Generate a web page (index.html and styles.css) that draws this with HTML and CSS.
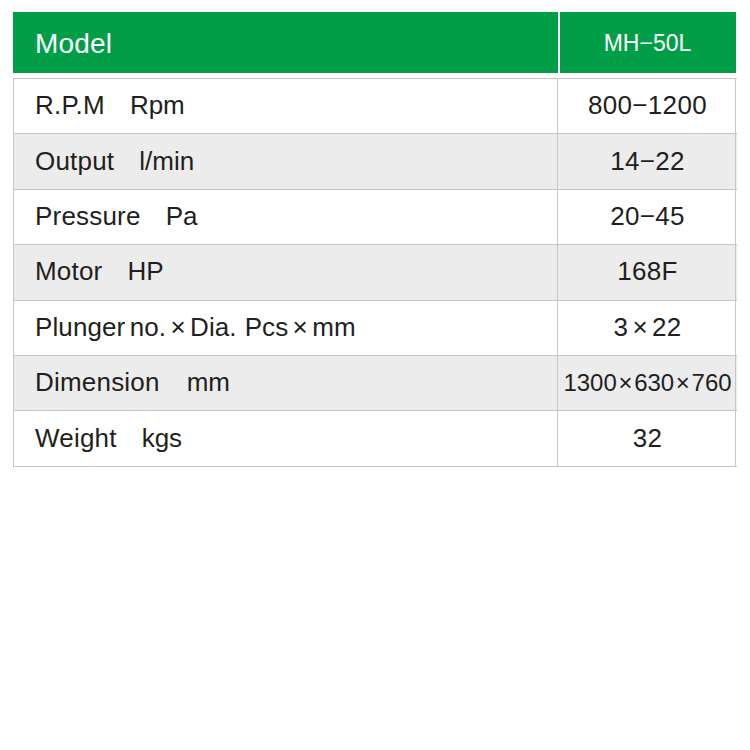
FILE: index.html
```html
<!DOCTYPE html>
<html>
<head>
<meta charset="utf-8">
<link rel="stylesheet" href="styles.css">
</head>
<body>
<div class="spec">
  <div class="head">
    <div class="hcell label">Model</div>
    <div class="hcell value">MH−50L</div>
  </div>
  <div class="rows">
    <div class="row"><div class="cell label"><span class="name">R.P.M</span><span class="unit">Rpm</span></div><div class="cell value">800−1200</div></div>
    <div class="row alt"><div class="cell label"><span class="name">Output</span><span class="unit">l/min</span></div><div class="cell value">14−22</div></div>
    <div class="row"><div class="cell label"><span class="name">Pressure</span><span class="unit">Pa</span></div><div class="cell value">20−45</div></div>
    <div class="row alt"><div class="cell label"><span class="name">Motor</span><span class="unit">HP</span></div><div class="cell value">168F</div></div>
    <div class="row"><div class="cell label"><span class="name tight">Plunger no. × Dia.</span><span class="unit tight short">Pcs × mm</span></div><div class="cell value times">3 × 22</div></div>
    <div class="row alt"><div class="cell label"><span class="name">Dimension</span><span class="unit wide">mm</span></div><div class="cell value small">1300 × 630 × 760</div></div>
    <div class="row"><div class="cell label"><span class="name">Weight</span><span class="unit">kgs</span></div><div class="cell value">32</div></div>
  </div>
</div>
</body>
</html>
```
FILE: styles.css
```css
html, body {
  margin: 0;
  padding: 0;
  background: #ffffff;
}
body {
  font-family: "Liberation Sans", Arial, sans-serif;
  color: #231f20;
}
.spec {
  padding: 12px 14px 0 13px;
  width: 723px;
}
.head {
  display: grid;
  grid-template-columns: 545px 177px;
  background: #009f47;
  height: 61px;
}
.hcell {
  display: flex;
  align-items: center;
  color: #ffffff;
  padding-top: 2px;
}
.hcell.label {
  padding-left: 22px;
  font-size: 28px;
  letter-spacing: 0.2px;
}
.hcell.value {
  justify-content: center;
  font-size: 23px;
  border-left: 2px solid #ffffff;
}
.rows {
  margin-top: 5px;
  border-top: 1px solid #c6c6c6;
  border-left: 1px solid #c6c6c6;
  width: 723px;
}
.row {
  display: grid;
  grid-template-columns: 544px 178px;
  height: 54.4px;
  border-bottom: 1px solid #c6c6c6;
  background: #ffffff;
}
.row.alt {
  background: #ececec;
}
.cell {
  display: flex;
  align-items: center;
  font-size: 26px;
  padding-bottom: 1px;
}
.cell.label {
  padding-left: 21px;
  border-right: 1px solid #c6c6c6;
}
.cell.value {
  justify-content: center;
  border-right: 1px solid #c6c6c6;
  letter-spacing: 0.3px;
  padding-left: 2px;
}
.cell.value.times {
  word-spacing: -3.5px;
}
.cell.value.small {
  font-size: 24px;
  letter-spacing: 0;
  word-spacing: -5px;
}
.name {
  letter-spacing: 0.2px;
}
.unit {
  margin-left: 25px;
}
.unit.wide {
  margin-left: 27px;
}
.tight {
  letter-spacing: 0.1px;
  word-spacing: -3px;
}
.unit.short {
  margin-left: 8px;
}
```
